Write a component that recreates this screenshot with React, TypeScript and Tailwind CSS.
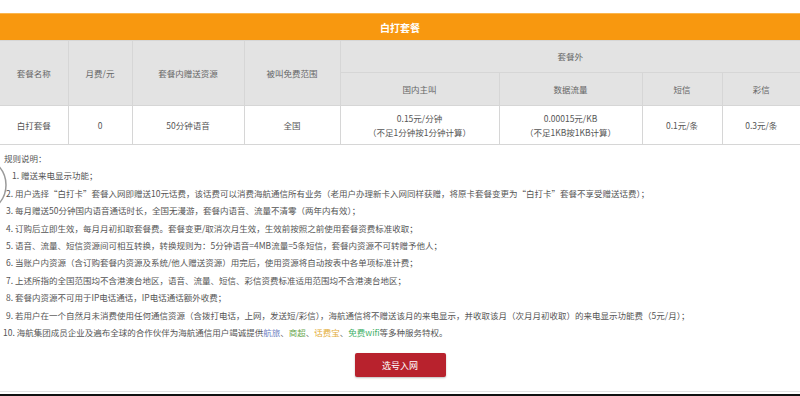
import React from 'react';

const font = { fontFamily: '"Noto Sans CJK SC", "Noto Sans", sans-serif' };

const rules: React.ReactNode[] = [
    '赠送来电显示功能；',
    '用户选择“白打卡”套餐入网即赠送10元话费，该话费可以消费海航通信所有业务（老用户办理新卡入网同样获赠，将原卡套餐变更为“白打卡”套餐不享受赠送话费）；',
    '每月赠送50分钟国内语音通话时长，全国无漫游，套餐内语音、流量不清零（两年内有效）；',
    '订购后立即生效，每月月初扣取套餐费。套餐变更/取消次月生效，生效前按照之前使用套餐资费标准收取；',
    '语音、流量、短信资源间可相互转换，转换规则为：5分钟语音=4MB流量=5条短信，套餐内资源不可转赠予他人；',
    '当账户内资源（含订购套餐内资源及系统/他人赠送资源）用完后，使用资源将自动按表中各单项标准计费；',
    '上述所指的全国范围均不含港澳台地区，语音、流量、短信、彩信资费标准适用范围均不含港澳台地区；',
    '套餐内资源不可用于IP电话通话，IP电话通话额外收费；',
    '若用户在一个自然月未消费使用任何通信资源（含拨打电话，上网，发送短/彩信），海航通信将不赠送该月的来电显示，并收取该月（次月月初收取）的来电显示功能费（5元/月）；',
    <>
        海航集团成员企业及遍布全球的合作伙伴为海航通信用户竭诚提供<span className="text-[#6f7fc2]">航旅</span>、
        <span className="text-[#6aa84f]">商超</span>、<span className="text-[#e3ad3c]">话费宝</span>、
        <span className="text-[#3fb068]">免费wifi</span>等多种服务特权。
    </>,
];

const th = 'border border-[#d6d6d6] font-normal text-[#666] text-[8.5px] bg-[#e3e3e3] p-0';
const td = 'border border-[#d6d6d6] text-[#555] text-[8.5px] p-0 leading-[14px]';

export default function App() {
    return (
        <div className="w-[800px] h-[396px] bg-white overflow-hidden relative" style={font}>
            <div className="h-[13px]" />

            {/* title bar */}
            <div className="h-[28px] bg-[#f8980f] border-t border-[#fbb64e] flex items-center justify-center text-white font-bold text-[10px]">
                白打套餐
            </div>

            {/* tariff table */}
            <table className="w-[800px] border-collapse table-fixed text-center -mt-px">
                <colgroup>
                    <col className="w-[68px]" />
                    <col className="w-[64px]" />
                    <col className="w-[112px]" />
                    <col className="w-[96px]" />
                    <col className="w-[159px]" />
                    <col className="w-[143px]" />
                    <col className="w-[80px]" />
                    <col className="w-[78px]" />
                </colgroup>
                <thead>
                    <tr className="h-[32px]">
                        <th rowSpan={2} className={th + ' border-l-0'}>套餐名称</th>
                        <th rowSpan={2} className={th}>月费/元</th>
                        <th rowSpan={2} className={th}>套餐内赠送资源</th>
                        <th rowSpan={2} className={th}>被叫免费范围</th>
                        <th colSpan={4} className={th + ' border-r-0'}>套餐外</th>
                    </tr>
                    <tr className="h-[33px]">
                        <th className={th}>国内主叫</th>
                        <th className={th}>数据流量</th>
                        <th className={th}>短信</th>
                        <th className={th + ' border-r-0'}>彩信</th>
                    </tr>
                </thead>
                <tbody>
                    <tr className="h-[39px]">
                        <td className={td + ' border-l-0'}>白打套餐</td>
                        <td className={td}>0</td>
                        <td className={td}>50分钟语音</td>
                        <td className={td}>全国</td>
                        <td className={td}>
                            <div>0.15元/分钟</div>
                            <div>（不足1分钟按1分钟计算）</div>
                        </td>
                        <td className={td}>
                            <div>0.00015元/KB</div>
                            <div>（不足1KB按1KB计算）</div>
                        </td>
                        <td className={td}>0.1元/条</td>
                        <td className={td + ' border-r-0'}>0.3元/条</td>
                    </tr>
                </tbody>
            </table>

            {/* rules */}
            <div className="pt-[5px] text-[8.5px] text-[#555] leading-[17.4px]">
                <div className="pl-[4px]">规则说明：</div>
                {rules.map((r, i) => (
                    <div
                        key={i}
                        className={i === 0 ? 'pl-[12px]' : i === 9 ? 'pl-[3px]' : 'pl-[6px]'}
                    >
                        {i + 1}. {r}
                    </div>
                ))}
            </div>

            <div className="flex justify-center mt-[12px]">
                <button className="w-[91px] h-[24px] bg-[#b8222d] rounded-[2px] text-white text-[9px] shadow-[0_1px_2px_rgba(0,0,0,0.25)]">
                    选号入网
                </button>
            </div>

            {/* decorative arc on the left edge */}
            <svg className="absolute left-0 top-[164px]" width="8" height="42" viewBox="0 0 8 42">
                <circle cx="-22" cy="21" r="28" fill="none" stroke="#9a9a9a" strokeWidth="1.5" />
            </svg>

            <div className="absolute left-0 right-0 top-[391px] h-px bg-[#e2e2e2]" />
            <div className="absolute left-0 right-0 top-[394px] h-[2px] bg-[#111]" />
        </div>
    );
}
